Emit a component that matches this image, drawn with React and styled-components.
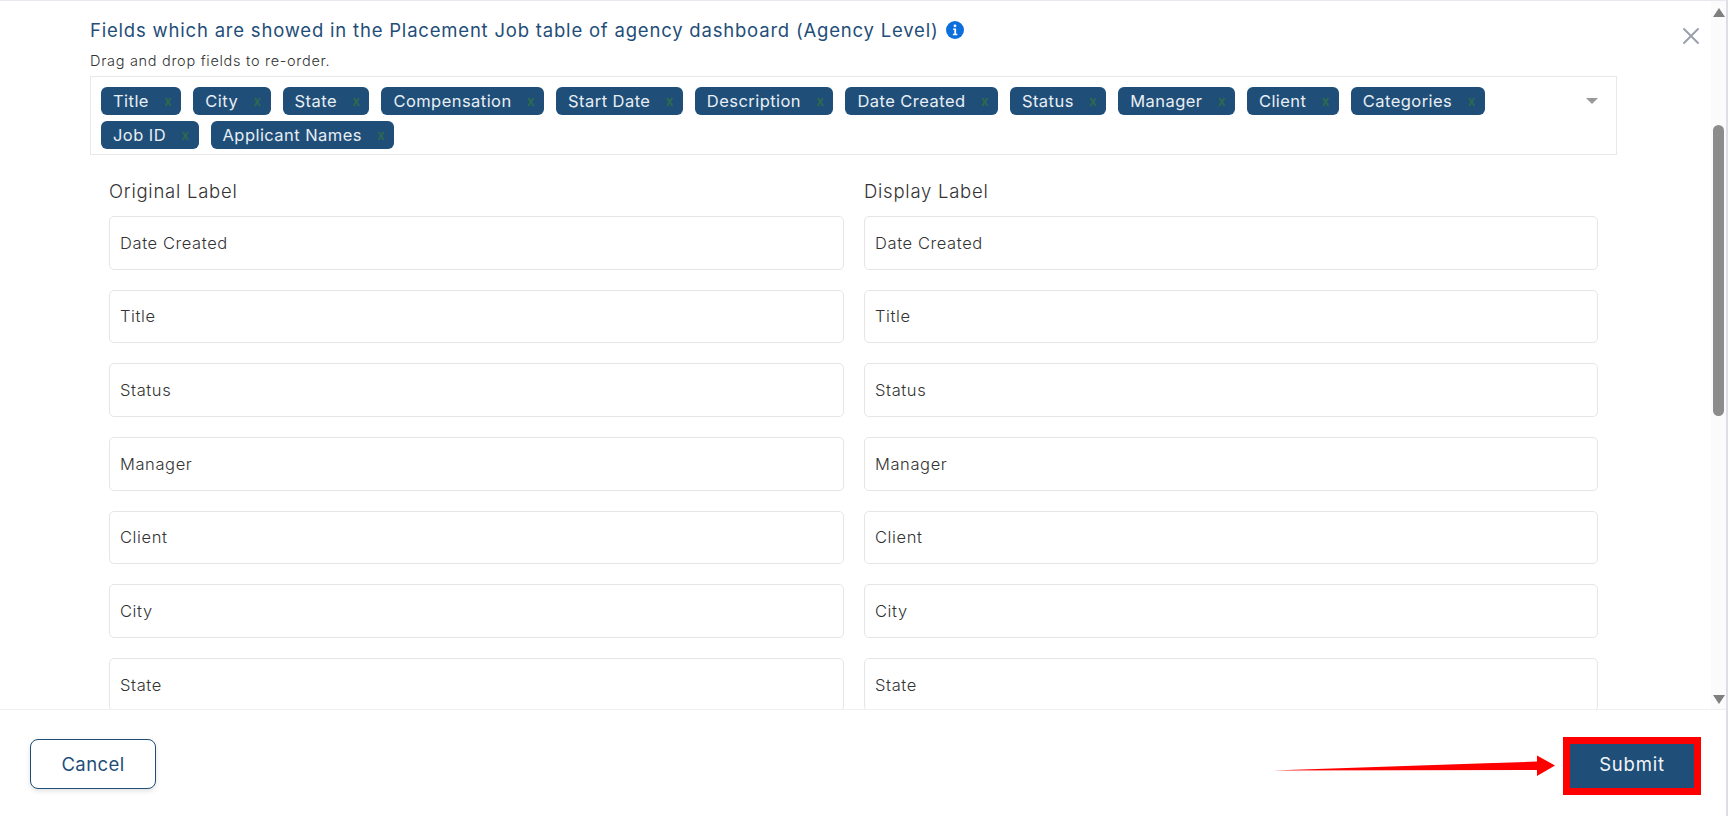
import React from "react";
import styled, { createGlobalStyle } from "styled-components";

const GlobalStyle = createGlobalStyle`
  html, body {
    margin: 0;
    padding: 0;
    height: 100%;
    overflow: hidden;
    background: #fff;
  }
  body {
    font-family: Inter, "Open Sans", sans-serif;
    color: #444;
  }
`;

const Modal = styled.div`
  position: relative;
  width: 1728px;
  height: 816px;
  box-sizing: border-box;
  border-top: 1px solid #e6e8ee;
  border-right: 2px solid #dcdfe4;
  display: flex;
  flex-direction: column;
  overflow: hidden;
`;

const Main = styled.div`
  height: 708px;
  display: flex;
  flex: none;
`;

const Content = styled.div`
  flex: 1;
  min-width: 0;
  overflow: hidden;
  padding: 0 0 0 90px;
`;

const TitleRow = styled.div`
  display: flex;
  align-items: center;
  gap: 7px;
  height: 28px;
  margin-top: 15px;
`;

const Title = styled.h2`
  margin: 0;
  font-size: 18.5px;
  font-weight: 400;
  letter-spacing: 0.8px;
  color: #1f4e79;
`;

const Hint = styled.p`
  margin: 8px 0 0;
  height: 18px;
  line-height: 18px;
  font-size: 14.5px;
  font-weight: 300;
  letter-spacing: 0.7px;
  color: #333;
`;

const Select = styled.div`
  box-sizing: border-box;
  position: relative;
  width: 1527px;
  height: 79px;
  margin-top: 6px;
  padding: 10px 40px 0 10px;
  border: 1px solid #e8e8e8;
  display: flex;
  flex-wrap: wrap;
  align-content: flex-start;
  gap: 6px 12px;
`;

const Chip = styled.span`
  box-sizing: border-box;
  height: 28px;
  padding: 0 9px 0 12px;
  display: inline-flex;
  align-items: center;
  justify-content: space-between;
  gap: 15.4px;
  border-radius: 6px;
  background: #1f4e79;
  color: #e8eef4;
  font-size: 16.5px;
  font-weight: 400;
  letter-spacing: 0.45px;
`;

const ChipClose = styled.span`
  color: #2c6a4f;
  font-size: 13px;
  font-weight: 700;
  line-height: 1;
`;

const Caret = styled.span`
  position: absolute;
  right: 18px;
  top: 21px;
  width: 0;
  height: 0;
  border-left: 6px solid transparent;
  border-right: 6px solid transparent;
  border-top: 6px solid #999;
`;

const Columns = styled.div`
  width: 1489px;
  margin: 22px 0 0 19px;
  display: grid;
  grid-template-columns: 735px 734px;
  column-gap: 20px;
`;

const Column = styled.div`
  display: flex;
  flex-direction: column;
  gap: 20px;
`;

const ColumnLabel = styled.div`
  height: 28px;
  line-height: 28px;
  margin-bottom: -9px;
  font-size: 18.5px;
  font-weight: 300;
  letter-spacing: 0.75px;
  color: #333;
`;

const Field = styled.div`
  box-sizing: border-box;
  height: 53.65px;
  flex: none;
  padding: 0 10px 0 10px;
  display: flex;
  align-items: center;
  border: 1px solid #e6e6e6;
  border-radius: 5px;
  font-size: 16.5px;
  font-weight: 300;
  letter-spacing: 0.6px;
  color: #333;
`;

const Track = styled.div`
  width: 15px;
  flex: none;
  background: #fbfbfb;
  display: flex;
  flex-direction: column;
  align-items: center;
  position: relative;
`;

const ArrowUp = styled.span`
  margin-top: 7px;
  width: 0;
  height: 0;
  border-left: 6px solid transparent;
  border-right: 6px solid transparent;
  border-bottom: 9px solid #7f7f7f;
`;

const ArrowDown = styled.span`
  margin-top: auto;
  margin-bottom: 5px;
  width: 0;
  height: 0;
  border-left: 6px solid transparent;
  border-right: 6px solid transparent;
  border-top: 9px solid #7f7f7f;
`;

const Thumb = styled.span`
  width: 11px;
  height: 291px;
  margin-top: 108px;
  border-radius: 6px;
  background: #8c8c8c;
`;

const CloseButton = styled.span`
  position: absolute;
  right: 26px;
  top: 26px;
  display: flex;
  color: #9aa1ad;
`;

const Footer = styled.div`
  flex: 1;
  border-top: 1px solid #f0f0f0;
  padding: 29px 25px 0 30px;
  display: flex;
  justify-content: space-between;
  align-items: flex-start;
`;

const CancelButton = styled.button`
  box-sizing: border-box;
  width: 126px;
  height: 50px;
  padding: 0 0 1px;
  border: 1px solid #1f4e79;
  border-radius: 8px;
  background: #fff;
  box-shadow: 0 2px 5px rgba(0, 0, 0, 0.12);
  color: #1f4e79;
  font-family: inherit;
  font-size: 18.5px;
  font-weight: 400;
  letter-spacing: 0.4px;
`;

const SubmitButton = styled.button`
  box-sizing: border-box;
  width: 138px;
  height: 58px;
  margin-top: -2px;
  padding: 0 0 4px;
  border: 7px solid #ff0000;
  border-radius: 0;
  background: #1f4e79;
  color: #f2f5f8;
  font-family: inherit;
  font-size: 18.5px;
  letter-spacing: 0.8px;
`;

const Annotation = styled.svg`
  position: absolute;
  left: 1270px;
  top: 749px;
`;

const chips = [
  "Title",
  "City",
  "State",
  "Compensation",
  "Start Date",
  "Description",
  "Date Created",
  "Status",
  "Manager",
  "Client",
  "Categories",
  "Job ID",
  "Applicant Names",
];

const fields = ["Date Created", "Title", "Status", "Manager", "Client", "City", "State"];

const InfoIcon = () => (
  <svg width="18" height="18" viewBox="0 0 18 18">
    <circle cx="9" cy="9" r="9" fill="#0d6fdc" />
    <circle cx="9" cy="4.8" r="1.4" fill="#fff" />
    <path d="M7.2 7.6h2.9v5.2h1.2v1.4H6.9v-1.4h1.4V9H7.2z" fill="#fff" />
  </svg>
);

const App = () => {
  return (
    <Modal>
      <GlobalStyle />
      <Main>
        <Content>
          <TitleRow>
            <Title>Fields which are showed in the Placement Job table of agency dashboard (Agency Level)</Title>
            <InfoIcon />
          </TitleRow>
          <Hint>Drag and drop fields to re-order.</Hint>
          <Select>
            {chips.map((chip) => (
              <Chip key={chip}>
                {chip}
                <ChipClose>x</ChipClose>
              </Chip>
            ))}
            <Caret />
          </Select>
          <Columns>
            <Column>
              <ColumnLabel>Original Label</ColumnLabel>
              {fields.map((field) => (
                <Field key={field}>{field}</Field>
              ))}
            </Column>
            <Column>
              <ColumnLabel>Display Label</ColumnLabel>
              {fields.map((field) => (
                <Field key={field}>{field}</Field>
              ))}
            </Column>
          </Columns>
        </Content>
        <Track>
          <ArrowUp />
          <Thumb />
          <ArrowDown />
        </Track>
      </Main>
      <CloseButton>
        <svg width="18" height="18" viewBox="0 0 18 18" fill="none" stroke="currentColor" strokeWidth="2" strokeLinecap="round">
          <path d="M2 2l14 14M16 2L2 16" />
        </svg>
      </CloseButton>
      <Footer>
        <CancelButton>Cancel</CancelButton>
        <SubmitButton>Submit</SubmitButton>
      </Footer>
      <Annotation width="290" height="32" viewBox="0 0 290 32">
        <path d="M3 20.5L267 11.5L267 5.5L285 15.5L267 26L267 20Z" fill="#ff0000" />
      </Annotation>
    </Modal>
  );
};

export default App;
